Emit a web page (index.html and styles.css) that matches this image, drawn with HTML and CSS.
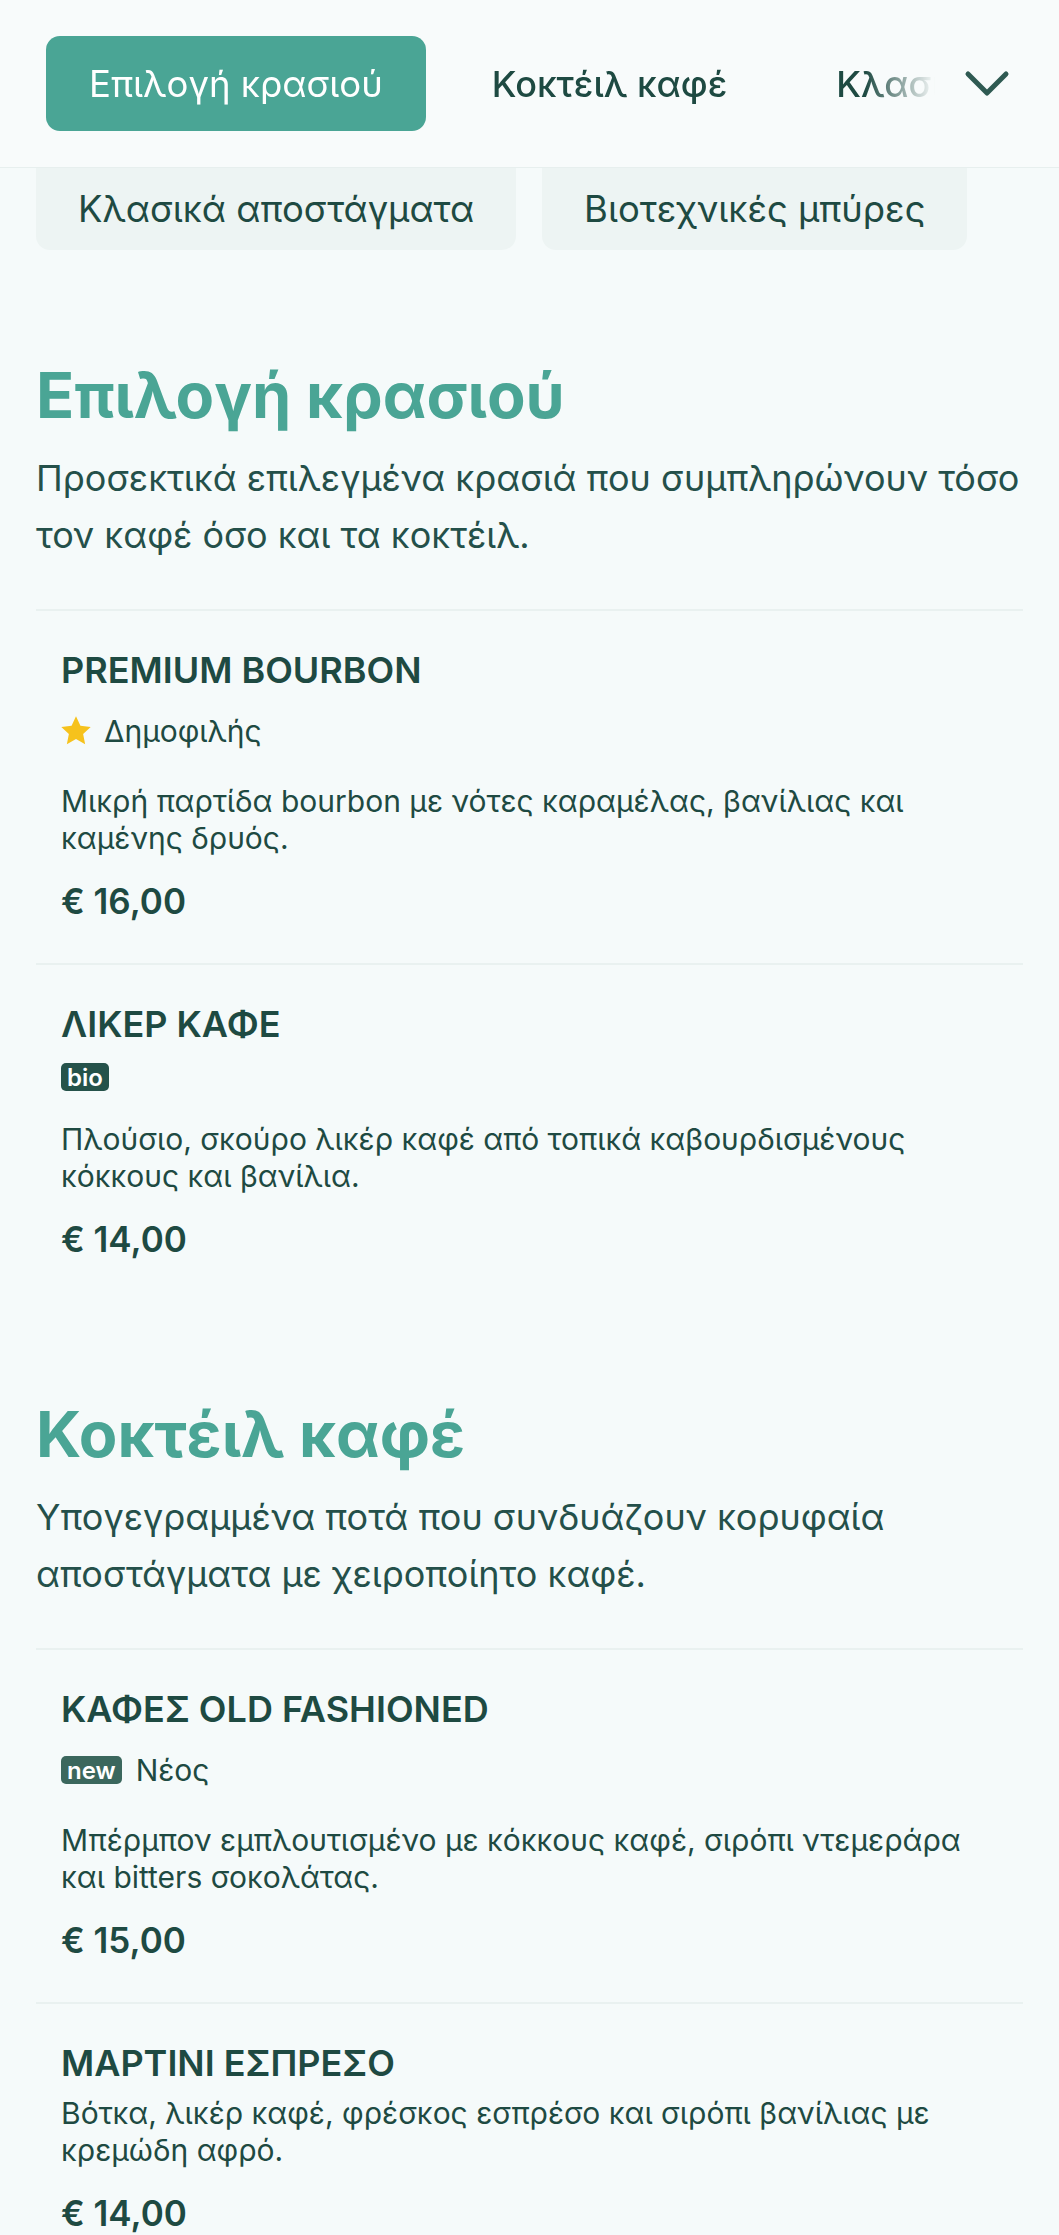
FILE: index.html
```html
<!DOCTYPE html>
<html lang="el">
<head>
  <meta charset="UTF-8" />
  <meta name="viewport" content="width=device-width, initial-scale=1.0"/>
  <title>Μενού ποτών</title>
  <link rel="stylesheet" href="styles.css">
</head>
<body>
  <header class="topbar">
    <nav class="tabs">
      <a class="tab active" href="#wine">Επιλογή κρασιού</a>
      <a class="tab" href="#coffee-cocktails">Κοκτέιλ καφέ</a>
      <a class="tab" href="#spirits">Κλασικά αποστάγματα</a>
      <a class="tab" href="#beers">Βιοτεχνικές μπύρες</a>
    </nav>
    <button class="more" aria-label="Όλες οι κατηγορίες">
      <svg width="46" height="28" viewBox="0 0 46 28"><polyline points="4,4 23,23 42,4" fill="none" stroke="#2f5a52" stroke-width="5" stroke-linecap="round" stroke-linejoin="round"/></svg>
    </button>
  </header>

  <div class="chips">
    <a class="chip" href="#spirits">Κλασικά αποστάγματα</a>
    <a class="chip" href="#beers">Βιοτεχνικές μπύρες</a>
  </div>

  <main>
    <section id="wine" class="category">
      <h2>Επιλογή κρασιού</h2>
      <p class="category-desc">Προσεκτικά επιλεγμένα κρασιά που συμπληρώνουν τόσο τον καφέ όσο και τα κοκτέιλ.</p>

      <article class="item">
        <h3 class="item-name">PREMIUM BOURBON</h3>
        <div class="item-tags">
          <span class="tag-popular">
            <svg width="30" height="30" viewBox="2 2 20 20"><path d="M12 2.2l2.95 6.3 6.85.8-5.05 4.7 1.35 6.8L12 17.4l-6.1 3.4 1.35-6.8L2.2 9.3l6.85-.8z" fill="#f6c21c"/></svg>
            Δημοφιλής
          </span>
        </div>
        <p class="item-desc">Μικρή παρτίδα bourbon με νότες καραμέλας, βανίλιας και καμένης δρυός.</p>
        <div class="item-price">€ 16,00</div>
      </article>

      <article class="item">
        <h3 class="item-name">ΛΙΚΕΡ ΚΑΦΕ</h3>
        <div class="item-tags">
          <span class="badge badge-bio">bio</span>
        </div>
        <p class="item-desc">Πλούσιο, σκούρο λικέρ καφέ από τοπικά καβουρδισμένους κόκκους και βανίλια.</p>
        <div class="item-price">€ 14,00</div>
      </article>
    </section>

    <section id="coffee-cocktails" class="category">
      <h2>Κοκτέιλ καφέ</h2>
      <p class="category-desc">Υπογεγραμμένα ποτά που συνδυάζουν κορυφαία αποστάγματα με χειροποίητο καφέ.</p>

      <article class="item">
        <h3 class="item-name">ΚΑΦΕΣ OLD FASHIONED</h3>
        <div class="item-tags">
          <span class="badge badge-new">new</span>
          <span class="tag-label">Νέος</span>
        </div>
        <p class="item-desc">Μπέρμπον εμπλουτισμένο με κόκκους καφέ, σιρόπι ντεμεράρα και bitters σοκολάτας.</p>
        <div class="item-price">€ 15,00</div>
      </article>

      <article class="item">
        <h3 class="item-name">ΜΑΡΤΙΝΙ ΕΣΠΡΕΣΟ</h3>
        <p class="item-desc">Βότκα, λικέρ καφέ, φρέσκος εσπρέσο και σιρόπι βανίλιας με κρεμώδη αφρό.</p>
        <div class="item-price">€ 14,00</div>
      </article>
    </section>
  </main>
</body>
</html>
```

FILE: styles.css
```css
body {
  font-family: "Inter", "Noto Sans", sans-serif;
  margin: 0;
  padding: 0;
  background: #f5fafa;
  color: #1e4a42;
}
a {
  color: inherit;
  text-decoration: none;
}

/* top bar with category tabs */
.topbar {
  position: sticky;
  top: 0;
  z-index: 2;
  display: flex;
  align-items: center;
  padding: 36px 35px 36px 46px;
  background: #f8fbfb;
  border-bottom: 1px solid #e7efee;
}
.tabs {
  flex: 1;
  min-width: 0;
  display: flex;
  gap: 23px;
  overflow: hidden;
  -webkit-mask-image: linear-gradient(to right, #000 calc(100% - 70px), transparent 100%);
  mask-image: linear-gradient(to right, #000 calc(100% - 70px), transparent 100%);
}
.tab {
  flex: none;
  height: 95px;
  display: flex;
  align-items: center;
  padding: 0 43px;
  border-radius: 14px;
  font-size: 36px;
  font-weight: 500;
  white-space: nowrap;
  color: #1e4a42;
}
.tab.active {
  background: #4aa595;
  color: #fff;
  font-weight: 400;
  font-size: 36.5px;
}
.more {
  flex: none;
  width: 74px;
  height: 74px;
  margin-left: 15px;
  display: flex;
  align-items: center;
  justify-content: center;
  padding: 0;
  border: none;
  background: none;
  cursor: pointer;
}

/* remaining categories */
.chips {
  display: flex;
  gap: 26px;
  padding: 0 36px;
}
.chip {
  height: 82px;
  display: flex;
  align-items: center;
  padding: 0 42px;
  background: #edf4f3;
  border-radius: 0 0 14px 14px;
  font-size: 36.4px;
  white-space: nowrap;
}

main {
  padding: 0 36px;
}
.category {
  padding-top: 96px;
}
.category:first-child {
  padding-top: 108px;
}
.category h2 {
  margin: 0;
  font-size: 63px;
  line-height: 74px;
  font-weight: 700;
  color: #4aa595;
}
.category-desc {
  margin: 18px 0 45px;
  font-size: 36px;
  line-height: 57px;
  color: #24504a;
}

/* menu items */
.item {
  padding: 37px 25px 40px;
  border-top: 2px solid #e9f1f0;
}
.item-name {
  margin: 0;
  font-size: 36px;
  line-height: 44px;
  font-weight: 600;
}
.item-tags {
  display: flex;
  align-items: center;
  gap: 14px;
  margin: 17px 0 30px;
}
.tag-popular {
  display: flex;
  align-items: center;
  gap: 13px;
  height: 44px;
  font-size: 30px;
}
.tag-label {
  font-size: 30px;
  line-height: 44px;
}
.badge {
  height: 28px;
  display: flex;
  align-items: center;
  padding: 0 6px;
  border-radius: 5px;
  font-size: 24px;
  font-weight: 600;
  color: #fff;
}
.badge-bio {
  background: #25524a;
}
.badge-new {
  background: #3b675d;
}
.item-desc {
  margin: 10px 0 0;
  max-width: 925px;
  font-size: 30px;
  line-height: 37px;
}
.item-price {
  margin-top: 22px;
  font-size: 35px;
  line-height: 44px;
  font-weight: 600;
}
```
